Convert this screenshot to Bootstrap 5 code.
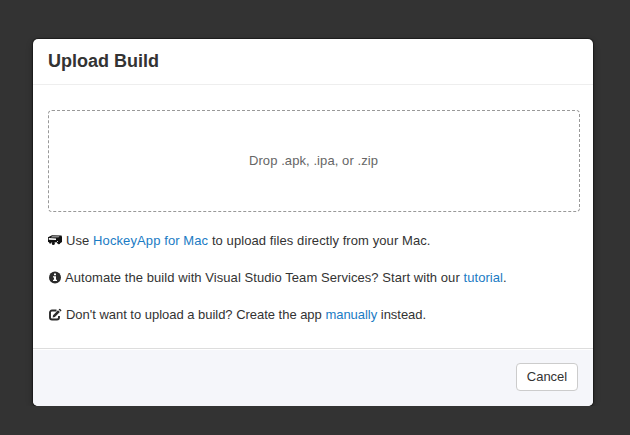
<!DOCTYPE html>
<html lang="en">
<head>
<meta charset="utf-8">
<meta name="viewport" content="width=device-width, initial-scale=1">
<title>Upload Build</title>
<link href="https://cdn.jsdelivr.net/npm/bootstrap@5.3.0/dist/css/bootstrap.min.css" rel="stylesheet">
<style>
body { background: #333; font: 13px/20px "Liberation Sans", Arial, sans-serif; color: #333; overflow: hidden; }
.upload-page { padding: 39px 37px 0 33px; }
.upload-dialog { height: 367px; color: #333; background: #fff; border: 0; border-radius: 5px; box-shadow: 0 0 1px 1px rgba(0,0,0,.4), 0 3px 7px rgba(0,0,0,.3); }
.upload-dialog .modal-header { height: 46px; padding: 0 15px 1px; border-bottom: 1px solid #eee; }
.upload-dialog .modal-title { font-size: 18px; line-height: 30px; font-weight: 700; }
.upload-dialog .modal-body { padding: 25px 13px 0 15px; }
.drop-zone { height: 102px; border: 1px dashed #999; border-radius: 4px; color: #666; margin-bottom: 19px; padding-right: 1px; letter-spacing: .08px; }
.upload-dialog p { margin-bottom: 17px; white-space: nowrap; }
.hint-mac { letter-spacing: .085px; }
.hint-mac a { letter-spacing: .1px; }
.hint-automate { letter-spacing: .065px; }
.hint-manual { letter-spacing: -.025px; }
.upload-dialog a { color: #1a7bc4; text-decoration: none; }
.upload-dialog svg { flex: none; }
.upload-dialog .modal-footer { height: 58px; padding: 0 15px 2px; background: #f5f6fa; border-top: 1px solid #ddd; border-radius: 0 0 5px 5px; box-shadow: inset 0 1px 0 #fff; }
.btn-cancel { width: 62px; height: 28px; padding: 0; margin: 0; font-size: 13px; line-height: 26px; color: #333; background: #fff; border: 1px solid #ccc; border-radius: 4px; }
</style>
</head>
<body>
<main class="upload-page">
  <div class="modal-content upload-dialog" role="dialog" aria-labelledby="title">
    <div class="modal-header">
      <h1 class="modal-title" id="title">Upload Build</h1>
    </div>
    <div class="modal-body">
      <div class="drop-zone d-flex align-items-center justify-content-center">Drop .apk, .ipa, or .zip</div>
      <p class="d-flex align-items-center"><svg class="me-1" width="14" height="14" viewBox="0 0 14 14"><path d="M0 3.300 4 1.200 13.500 1.500 14 3V8l-1.500 1H9L8.500 8 5.500 9 0 8z" fill="#111"/><path d="M.8 4 8 4.400V6L.8 5.700zM4 2.500h7.500l-1 .8H3zM9 7h1v1H9z" fill="#fff"/><circle cx="5.300" cy="9.500" r="1.500" fill="#111"/><circle cx="10.800" cy="8.800" r="1.500" fill="#111"/><path d="M1 8h2v1.600H1.500z" fill="#111"/></svg><span class="hint-mac">Use <a href="#">HockeyApp for Mac</a> to upload files directly from your Mac.</span></p>
      <p class="d-flex align-items-center"><svg width="17" height="14" viewBox="0 0 17 14"><circle cx="7" cy="6.500" r="6" fill="#2b2b2b"/><path d="M6 2.500h2v1.800H6zM5 5.200h3v3.500h1v1.200H5V8.700h1V6.400H5z" fill="#fff"/></svg><span class="hint-automate">Automate the build with Visual Studio Team Services? Start with our <a href="#">tutorial</a>.</span></p>
      <p class="d-flex align-items-center"><svg class="me-1" width="14" height="14" viewBox="0 0 14 14"><path d="M8.500 2.500H4A2 2 0 0 0 2 4.500v5a2 2 0 0 0 2 2h5a2 2 0 0 0 2-2V8" fill="none" stroke="#2b2b2b" stroke-width="1.900"/><path d="m5 7.200 5-5 1.900 1.900-5 5L4.700 9.500zM10.600 1.600l.7-.7q.5-.3.900.1l1 1q.4.4 0 .9l-.7.7z" fill="#2b2b2b"/></svg><span class="hint-manual">Don't want to upload a build? Create the app <a href="#">manually</a> instead.</span></p>
    </div>
    <div class="modal-footer justify-content-end">
      <button type="button" class="btn btn-cancel">Cancel</button>
    </div>
  </div>
</main>
<script src="https://cdn.jsdelivr.net/npm/bootstrap@5.3.0/dist/js/bootstrap.bundle.min.js"></script>
</body>
</html>
